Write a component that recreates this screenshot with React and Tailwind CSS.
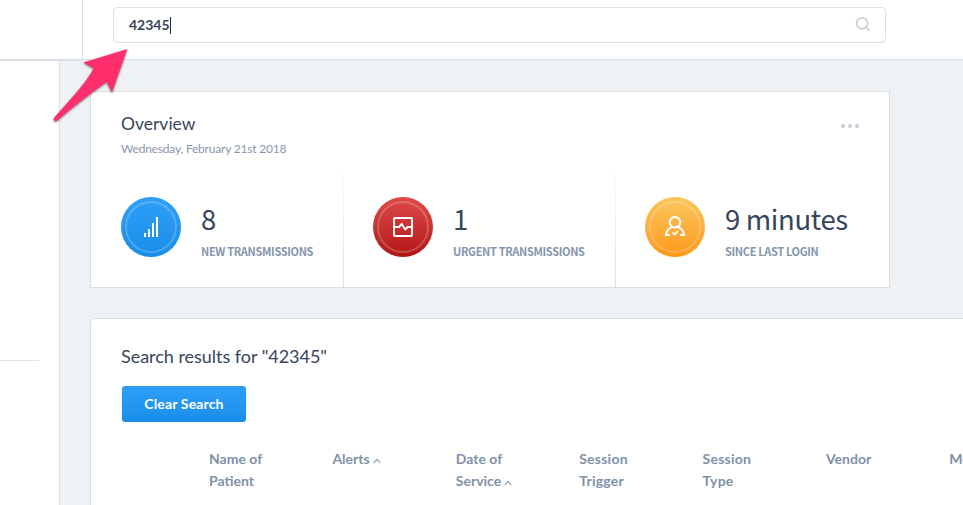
import React from "react";

const SANS = "font-['Lato','Open_Sans',sans-serif]";
const NARROW = "font-['Noto_Sans_CJK_SC',sans-serif]";

function BarsIcon() {
  return (
    <svg width="60" height="60" viewBox="0 0 60 60" fill="#fff" className="absolute inset-0">
      <rect x="23" y="36" width="2" height="4" />
      <rect x="27" y="32" width="2" height="8" />
      <rect x="31" y="26" width="2" height="14" />
      <rect x="35" y="20" width="2" height="20" />
    </svg>
  );
}

function PulseIcon() {
  return (
    <svg width="60" height="60" viewBox="0 0 60 60" fill="none" stroke="#fff" strokeWidth="1.9" className="absolute inset-0">
      <rect x="21" y="21" width="18" height="18" rx="0.8" />
      <path d="M21 30H26L28.7 27L32.2 32.5L34.5 30H39" strokeLinejoin="round" />
    </svg>
  );
}

function UserIcon() {
  return (
    <svg width="60" height="60" viewBox="0 0 60 60" fill="none" stroke="#fff" strokeWidth="2" className="absolute inset-0">
      <circle cx="30" cy="25.2" r="5.3" />
      <path d="M25 38.1H21C21.2 34.2 23.5 31.6 26.8 30.2M33.2 30.2C36.5 31.6 38.8 34.2 39 38.1H35" />
      <path d="M27.6 35.4L29.7 37.5L33 34.2" strokeWidth="1.8" />
    </svg>
  );
}

function Stat({ tone, icon, value, label, className }) {
  return (
    <div className={`flex pt-[32px] ${className}`}>
      <div className={`relative h-[60px] w-[60px] shrink-0 rounded-full bg-linear-to-b ${tone}`}>
        <div className="absolute inset-[4px] rounded-full border-2 border-white/20" />
        {icon}
      </div>
      <div className={`ml-5 whitespace-nowrap ${NARROW}`}>
        <div className="mt-px h-[40px] text-[27.5px] leading-[40px] tracking-[-0.35px] text-[#37455b]">{value}</div>
        <div className="mt-[5px] text-[11px] leading-[16px] font-bold tracking-[-0.33px] text-[#8595ac]">{label}</div>
      </div>
    </div>
  );
}

function Divider() {
  return <div className="-mt-[6px] h-[128px] w-px shrink-0 bg-linear-to-b from-white to-[#dcdfe3]" />;
}

function Caret() {
  return (
    <svg className="-mb-px ml-[3px] inline-block" width="8" height="6" viewBox="0 0 8 6" fill="none" stroke="#8796aa" strokeWidth="1.1">
      <path d="M0.7 5L4 1.4L7.3 5" />
    </svg>
  );
}

const columns = [
  { lines: ["Name of", "Patient"] },
  { lines: ["Alerts"], sort: true },
  { lines: ["Date of", "Service"], sort: true },
  { lines: ["Session", "Trigger"], wide: true },
  { lines: ["Session", "Type"], wide: true },
  { lines: ["Vendor"] },
  { lines: ["Model"] },
];

export default function App() {
  return (
    <div className={`relative flex h-[505px] w-[963px] flex-col overflow-hidden bg-[#eef2f5] ${SANS}`}>
      <header className="flex h-[61px] shrink-0">
        <div className="h-[61px] w-[83px] shrink-0 border-b-2 border-[#dcdfe5] bg-white">
          <div className="h-[59px] border-r border-[#dcdfe5]" />
        </div>
        <div className="h-[60px] grow border-b border-[#dadfe4] bg-white pt-[7px] pl-[30px]">
          <div className="flex h-[36px] w-[773px] items-center rounded-[4px] border border-[#dcdfe7] pl-[15px]">
            <span className="-mt-px text-[14px] font-bold tracking-[-0.01px] text-[#37455b]">42345</span>
            <span className="h-[17px] w-px bg-[#202a3a]" />
            <svg className="-mt-[2px] mr-[14px] ml-auto" width="16" height="16" viewBox="0 0 16 16" fill="none" stroke="#cdd1db" strokeWidth="1.8">
              <circle cx="7.1" cy="7.3" r="5.5" />
              <path d="M11 11.2L14.7 14.8" />
            </svg>
          </div>
        </div>
      </header>

      <div className="flex min-h-0 grow">
        <aside className="w-[60px] shrink-0 border-r border-[#dadfe4] bg-white pt-[299px]">
          <div className="h-px w-[39px] bg-[#e3e5ee]" />
        </aside>

        <main className="shrink-0 pt-[30px] pl-[30px]">
          <section className="h-[197px] w-[800px] border border-[#dadfe3] bg-white">
            <div className="flex h-[73px] justify-between pr-[30px] pl-[30px]">
              <div>
                <h1 className="mt-[20px] text-[17.5px] leading-[24px] text-[#37455b]">Overview</h1>
                <p className="mt-[5px] text-[12px] leading-[16px] tracking-[-0.2px] text-[#8796ae]">Wednesday, February 21st 2018</p>
              </div>
              <div className="mt-[32px] flex gap-[3px]">
                <i className="h-1 w-1 rounded-full bg-[#c4cdd8]" />
                <i className="h-1 w-1 rounded-full bg-[#c4cdd8]" />
                <i className="h-1 w-1 rounded-full bg-[#c4cdd8]" />
              </div>
            </div>
            <div className="flex h-[122px]">
              <Stat
                className="w-[252px] pl-[30px]"
                tone="from-[#2fa0f8] to-[#188de8]"
                icon={<BarsIcon />}
                value="8"
                label="NEW TRANSMISSIONS"
              />
              <Divider />
              <Stat
                className="w-[271px] pl-[29px]"
                tone="from-[#de4a4a] to-[#b01212]"
                icon={<PulseIcon />}
                value="1"
                label="URGENT TRANSMISSIONS"
              />
              <Divider />
              <Stat
                className="w-[273px] pl-[29px]"
                tone="from-[#f8c75a] to-[#ff9815]"
                icon={<UserIcon />}
                value="9 minutes"
                label="SINCE LAST LOGIN"
              />
            </div>
          </section>

          <section className="mt-[30px] h-[220px] w-[920px] rounded-[4px] border border-[#dadfe3] bg-white pl-[30px]">
            <h2 className="pt-[25px] text-[18px] leading-[24px] tracking-[-0.03px] text-[#37455b]">Search results for "42345"</h2>
            <button className="mt-[18px] ml-px block h-[36px] w-[124px] rounded-[3px] bg-linear-to-b from-[#2fa0f8] to-[#188de8] pb-px text-[14px] font-bold tracking-[0.15px] text-white">
              Clear Search
            </button>
            <div className="mt-[26px] ml-[88px] flex text-[14px] leading-[22px] font-bold text-[#8091a9]">
              {columns.map((c, i) => (
                <div key={i} className={`w-[123.4px] shrink-0 whitespace-nowrap ${c.wide ? "tracking-[0.25px]" : ""}`}>
                  {c.lines.map((l, j) => (
                    <div key={l}>
                      {l}
                      {c.sort && j === c.lines.length - 1 && <Caret />}
                    </div>
                  ))}
                </div>
              ))}
            </div>
          </section>
        </main>
      </div>

      <svg
        className="absolute top-[44px] left-[46px] drop-shadow-[0_1px_1px_rgba(0,0,0,0.5)]"
        width="90"
        height="84"
        viewBox="46 44 90 84"
        fill="#ff2f6d"
      >
        <path d="M127.3 49L83.3 62.5L93.7 68.5C86 83 69 101 54.2 117.5C52.5 119.5 54.7 122.2 57 120.7C72 108 88 95 106.5 82L112 92.5Z" />
      </svg>
    </div>
  );
}
